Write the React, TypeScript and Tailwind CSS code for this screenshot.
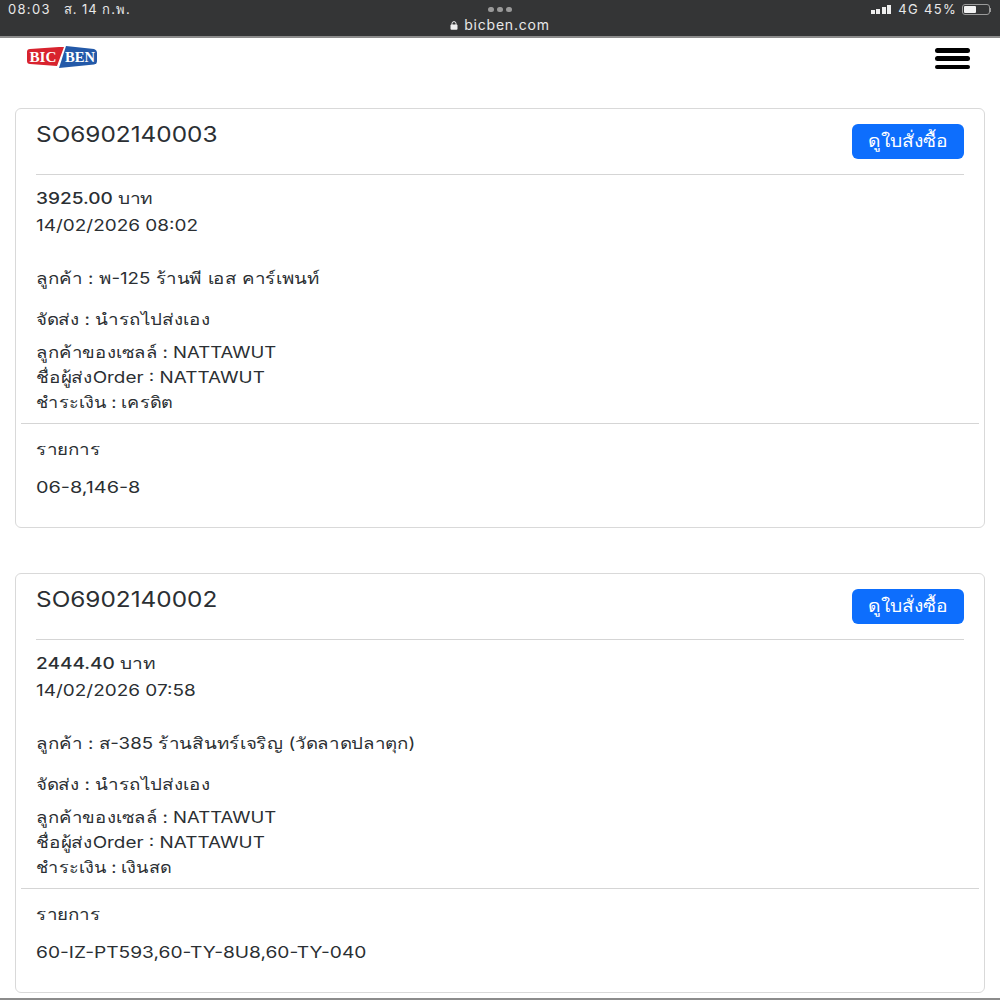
const orders = [
  { id: "SO6902140003", total: "3925.00 บาท", date: "14/02/2026 08:02", customer: "ลูกค้า : พ-125 ร้านพี เอส คาร์เพนท์", pay: "เครดิต", items: "06-8,146-8", itemsClass: "leading-[27px] mt-[11px] origin-left scale-x-[1.24]" },
  { id: "SO6902140002", total: "2444.40 บาท", date: "14/02/2026 07:58", customer: "ลูกค้า : ส-385 ร้านสินทร์เจริญ (วัดลาดปลาตุก)", pay: "เงินสด", items: "60-IZ-PT593,60-TY-8U8,60-TY-040", itemsClass: "leading-[27px] mt-[11px] origin-left scale-x-[1.197]" },
];

function Logo() {
  return (
    <svg width="72" height="24" viewBox="0 0 72 24" className="block">
      <path d="M1 7 Q1 4 4 4 L33 2 L38 2 L31 21 L4 19 Q1 19 1 16 Z" fill="#d8232e" />
      <path d="M40 1 L68 4 Q71 5 71 8 L71 16 Q71 19 68 19.5 L33 23 Z" fill="#2359a8" />
      <text x="3.5" y="16.5" fontFamily="'Liberation Serif', serif" fontWeight="700" fontSize="15" fill="#fff" textLength="27" lengthAdjust="spacingAndGlyphs">BIC</text>
      <text x="39" y="16.5" fontFamily="'Liberation Serif', serif" fontWeight="700" fontSize="15" fill="#fff" textLength="30" lengthAdjust="spacingAndGlyphs">BEN</text>
    </svg>
  );
}

function OrderCard({ o }: { o: (typeof orders)[number] }) {
  return (
    <div className="border border-[#d9d9d9] rounded-[6px] h-[420px] px-[5px] pt-[15px] text-[#2b2f33]">
      <div className="px-[15px]">
        <div className="flex justify-between items-start border-b border-[#d5d5d5] h-[51px]">
          <div className="text-[21px] leading-[22px] origin-left scale-x-[1.16]">{o.id}</div>
          <button className="w-[112px] h-[35px] rounded-[6px] bg-[#0d6efd] text-white text-[17px] leading-[35px]">
            <span className="inline-block scale-x-[1.13]">ดูใบสั่งซื้อ</span>
          </button>
        </div>
        <div className="pt-[10px] text-[16px]">
          <div className="leading-[27px] font-medium origin-left scale-x-[1.19]">{o.total}</div>
          <div className="leading-[27px] origin-left scale-x-[1.185]">{o.date}</div>
          <div className="leading-[27px] mt-[26px] origin-left scale-x-[1.167]">{o.customer}</div>
          <div className="leading-[27px] mt-[14px] origin-left scale-x-[1.17]">จัดส่ง : นำรถไปส่งเอง</div>
          <div className="leading-[25px] mt-[7px] origin-left scale-x-[1.156]">ลูกค้าของเซลล์ : NATTAWUT</div>
          <div className="leading-[25px] origin-left scale-x-[1.18]">ชื่อผู้ส่งOrder : NATTAWUT</div>
          <div className="leading-[25px] origin-left scale-x-[1.13]">ชำระเงิน : {o.pay}</div>
        </div>
      </div>
      <div className="border-t border-[#d5d5d5] mt-[8px] px-[15px] text-[16px]">
        <div className="leading-[27px] mt-[12px] origin-left scale-x-[1.17]">รายการ</div>
        <div className={o.itemsClass}>{o.items}</div>
      </div>
    </div>
  );
}

export default function App() {
  return (
    <div className="w-[1000px] h-[1000px] overflow-hidden bg-white font-['Inter','Noto_Sans',sans-serif] flex flex-col">
      <div className="h-[38px] shrink-0 bg-[#343536] border-b-2 border-[#8c8c8c] grid grid-cols-3 px-[8px] text-[#e8e8e8] text-[13px] tracking-[0.1em]">
        <div className="leading-[19px] whitespace-nowrap flex gap-[13px]">
          <span>08:03</span>
          <span className="tracking-[0.075em]">ส. 14 ก.พ.</span>
        </div>
        <div className="flex flex-col items-center tracking-[0.06em]">
          <div className="flex gap-[3px] mt-[7px]">
            <span className="w-[6px] h-[5px] rounded-full bg-[#9a9a9a]" />
            <span className="w-[6px] h-[5px] rounded-full bg-[#9a9a9a]" />
            <span className="w-[6px] h-[5px] rounded-full bg-[#9a9a9a]" />
          </div>
          <div className="flex items-center gap-[6px] mt-[4px] leading-[18px] text-[14px]">
            <svg width="8" height="9" viewBox="0 0 8 9"><path d="M2 4V2.6a2 2 0 0 1 4 0V4" fill="none" stroke="#eee" strokeWidth="1" /><rect x="0.5" y="3.6" width="7" height="5.2" rx="1" fill="#eee" /></svg>
            bicben.com
          </div>
        </div>
        <div className="flex justify-end items-start gap-[5px] leading-[19px] pr-[1px]">
          <div className="flex items-end gap-[1.5px] h-[10px] mt-[4px] mr-[2px]">
            <span className="w-[4px] h-[4px] bg-[#eee]" />
            <span className="w-[4px] h-[5px] bg-[#eee]" />
            <span className="w-[4px] h-[7px] bg-[#eee]" />
            <span className="w-[4px] h-[9px] bg-[#eee]" />
          </div>
          <span>4G</span>
          <span>45%</span>
          <div className="flex items-center mt-[4px]">
            <div className="w-[28px] h-[11px] border border-[#9a9a9a] rounded-[3px] p-[1px]">
              <div className="w-[12px] h-full bg-[#f2f2f2] rounded-[1px]" />
            </div>
            <span className="w-[1px] h-[4px] bg-[#9a9a9a]" />
          </div>
        </div>
      </div>
      <div className="h-[70px] shrink-0 flex justify-between items-start pl-[26px] pr-[30px]">
        <div className="mt-[7px]"><Logo /></div>
        <div className="mt-[10px] w-[35px] flex flex-col gap-[3.75px]">
          <span className="h-[4.5px] rounded-full bg-black" />
          <span className="h-[4.5px] rounded-full bg-black" />
          <span className="h-[4.5px] rounded-full bg-black" />
        </div>
      </div>
      <div className="px-[15px] flex flex-col gap-[45px]">
        {orders.map((o) => <OrderCard key={o.id} o={o} />)}
      </div>
      <div className="mt-auto h-[2px] bg-[#8c8c8c] shrink-0" />
    </div>
  );
}
